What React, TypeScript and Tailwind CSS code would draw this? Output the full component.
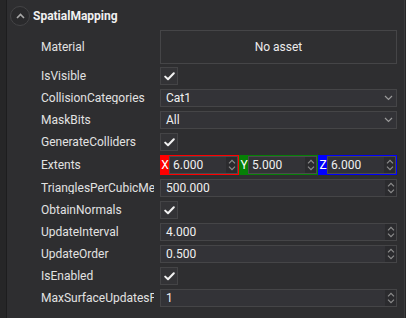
import React from 'react'

const font = { fontFamily: 'Roboto, "Liberation Sans", sans-serif' }

const Check = () => (
  <div className="flex h-[18px] w-[18px] items-center justify-center border border-[#444446] bg-[#333336]">
    <svg width="11" height="9" viewBox="0 0 11 9">
      <path d="M1.2 4.6 4 7.3 9.8 1.2" fill="none" stroke="#f2f2f2" strokeWidth="2" strokeLinecap="round" strokeLinejoin="round" />
    </svg>
  </div>
)

const Spin = () => (
  <div className="flex h-full w-[11px] flex-col items-center justify-center gap-[2px] bg-[#2b2b2e]">
    <svg width="8" height="5" viewBox="0 0 8 5">
      <path d="M1 4.3 4 1.3 7 4.3" fill="none" stroke="#8c8c8c" strokeWidth="1.2" />
    </svg>
    <svg width="8" height="5" viewBox="0 0 8 5">
      <path d="M1 0.7 4 3.7 7 0.7" fill="none" stroke="#8c8c8c" strokeWidth="1.2" />
    </svg>
  </div>
)

const NumberBox = ({ value }: { value: string }) => (
  <div className="flex h-[18px] w-full items-center border border-[#454547] bg-[#333337]">
    <span className="flex-1 pl-[5px] text-[12px] leading-none text-[#f0f0f0]">{value}</span>
    <Spin />
  </div>
)

const Select = ({ value }: { value: string }) => (
  <div className="flex h-[18px] w-full items-center border border-[#454547] bg-[#333337]">
    <span className="flex-1 pl-[5px] text-[12px] leading-none text-[#f0f0f0]">{value}</span>
    <svg className="mr-[3px]" width="9" height="6" viewBox="0 0 9 6">
      <path d="M1 1 4.5 4.5 8 1" fill="none" stroke="#9a9a9a" strokeWidth="1.2" />
    </svg>
  </div>
)

const Axis = ({ axis, value, color }: { axis: string; value: string; color: string }) => (
  <div className={`flex h-[20px] flex-1 items-stretch border ${color}`}>
    <span className="flex w-[8px] items-center justify-center text-[12px] leading-none text-white">{axis}</span>
    <div className="flex flex-1 items-center border border-[#4a4a4c] bg-[#333337]">
      <span className="flex-1 pl-[3px] text-[12px] leading-none text-[#f0f0f0]">{value}</span>
      <Spin />
    </div>
  </div>
)

const Row = ({ label, h, children }: { label: string; h: string; children: React.ReactNode }) => (
  <div className={`flex items-center ${h}`}>
    <div className="w-[113px] shrink-0 overflow-hidden whitespace-nowrap text-[12px] leading-none text-[#e2e2e2]">
      {label}
    </div>
    <div className="ml-[6px] flex flex-1 items-center">{children}</div>
  </div>
)

export default function App() {
  return (
    <div className="flex h-[318px] w-[406px] bg-[#2e2e30]" style={font}>
      <div className="w-[6px] bg-[#262627]" />
      <div className="w-px bg-[#1d1d1e]" />
      <div className="flex flex-1 flex-col">
        <div className="flex h-[29px] items-center pt-[2px]">
          <div className="ml-[3px] flex h-[20px] w-[20px] items-center justify-center rounded-full border border-[#444446] bg-[#2a2a2c]">
            <svg width="9" height="6" viewBox="0 0 9 6">
              <path d="M1 5 4.5 1.5 8 5" fill="none" stroke="#a8a8a8" strokeWidth="1.6" />
            </svg>
          </div>
          <span className="ml-[3px] text-[12px] font-bold text-[#f0f0f0]">SpatialMapping</span>
        </div>
        <div className="flex flex-col pl-[34px] pr-[7px]">
          <Row label="Material" h="h-[36px]">
            <div className="flex h-[34px] w-full items-center justify-center border border-[#454547] bg-[#2f2f31] text-[12px] text-[#ececec]">
              No asset
            </div>
          </Row>
          <Row label="IsVisible" h="h-[22px]">
            <Check />
          </Row>
          <Row label="CollisionCategories" h="h-[22px]">
            <Select value="Cat1" />
          </Row>
          <Row label="MaskBits" h="h-[22px]">
            <Select value="All" />
          </Row>
          <Row label="GenerateColliders" h="h-[22px]">
            <Check />
          </Row>
          <Row label="Extents" h="h-[23px]">
            <div className="flex w-full">
              <Axis axis="X" value="6.000" color="border-[#ff0000] bg-[#ff0000]" />
              <Axis axis="Y" value="5.000" color="border-[#068006] bg-[#068006]" />
              <Axis axis="Z" value="6.000" color="border-[#0000ff] bg-[#0000ff]" />
            </div>
          </Row>
          <Row label="TrianglesPerCubicMeter" h="h-[23px]">
            <NumberBox value="500.000" />
          </Row>
          <Row label="ObtainNormals" h="h-[22px]">
            <Check />
          </Row>
          <Row label="UpdateInterval" h="h-[22px]">
            <NumberBox value="4.000" />
          </Row>
          <Row label="UpdateOrder" h="h-[22px]">
            <NumberBox value="0.500" />
          </Row>
          <Row label="IsEnabled" h="h-[22px]">
            <Check />
          </Row>
          <Row label="MaxSurfaceUpdatesPerFrame" h="h-[22px]">
            <NumberBox value="1" />
          </Row>
        </div>
      </div>
      <div className="w-px bg-[#3c3c3e]" />
      <div className="w-px bg-[#262627]" />
    </div>
  )
}
